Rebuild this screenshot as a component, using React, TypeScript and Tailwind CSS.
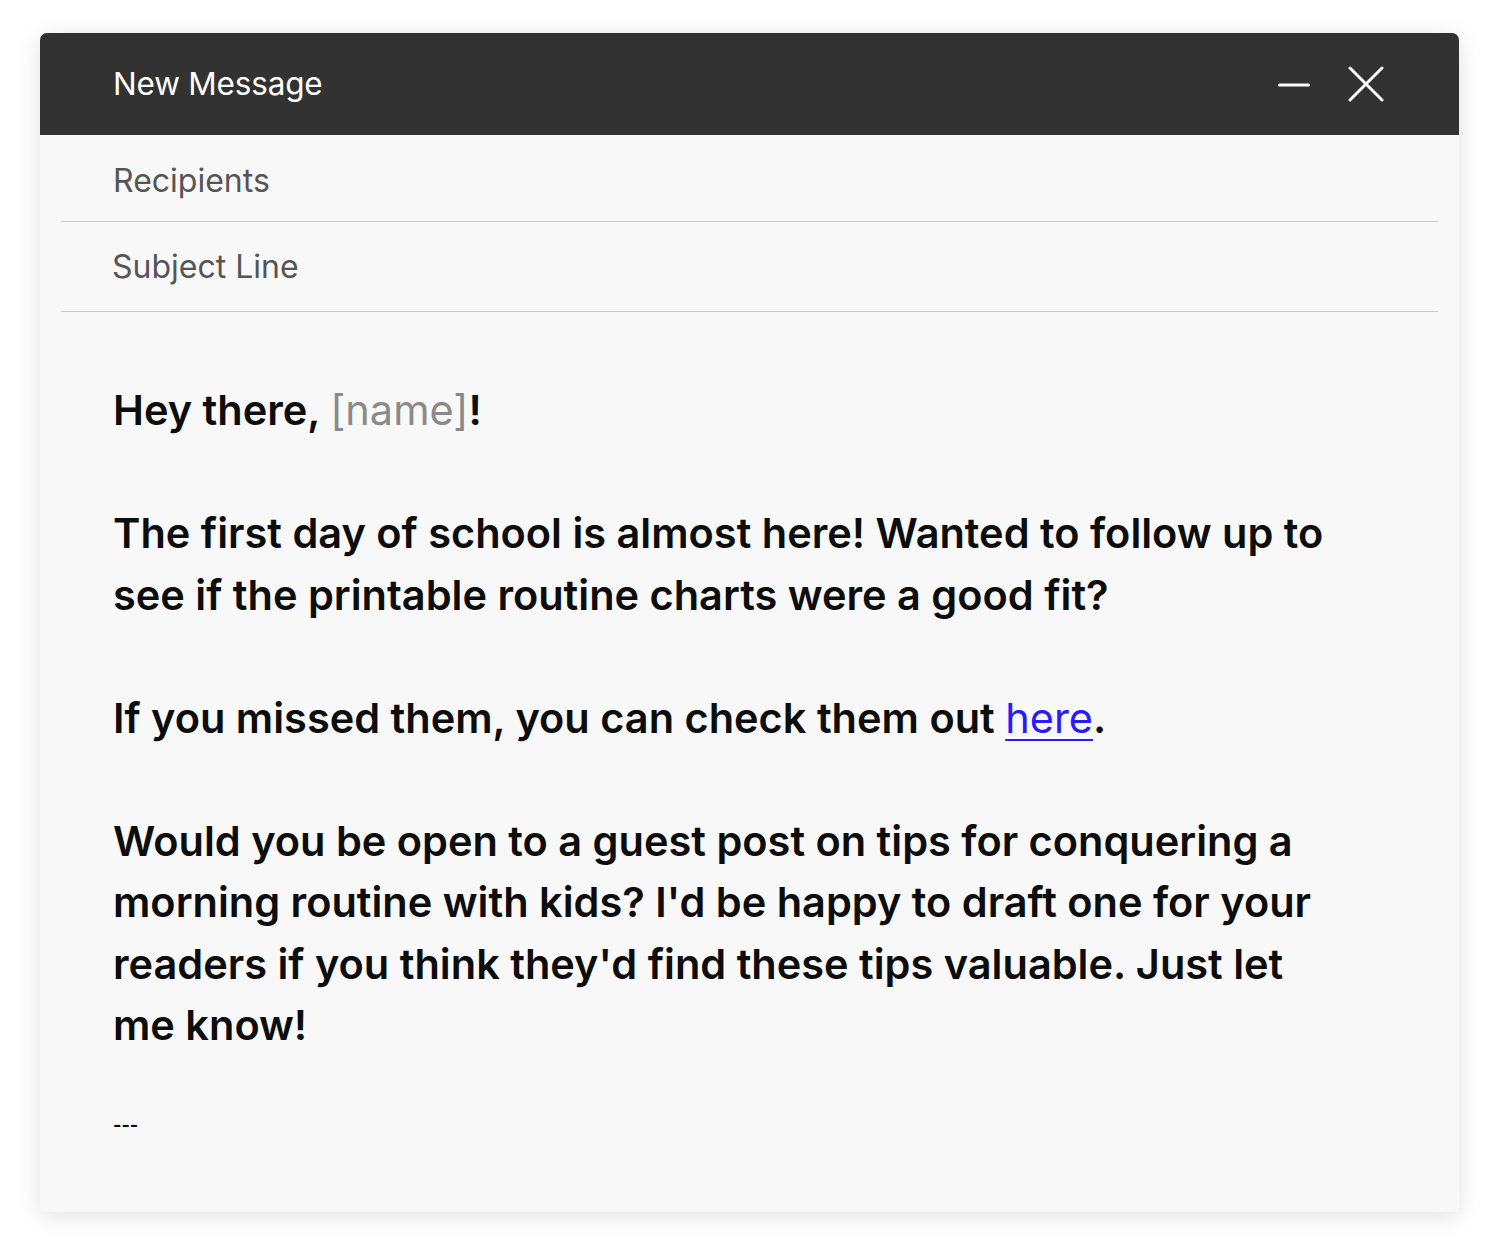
const body = "font-['Inter',sans-serif]";

export default function App() {
  return (
    <div className="min-h-screen bg-white pt-[33px] pl-[40px]">
      <div className="w-[1419px] h-[1179px] bg-[#f8f8f8] rounded-t-[7px] shadow-[0_4px_24px_rgba(0,0,0,0.12)] flex flex-col">
        {/* Header */}
        <div className="h-[102px] bg-[#323232] rounded-t-[7px] flex items-center justify-between pl-[73px] pr-[75px]">
          <span className={`${body} text-white text-[31.5px] font-normal tracking-[-0.2px]`}>New Message</span>
          <div className="flex items-center gap-[38px]">
            <svg width="32" height="6" viewBox="0 0 32 6" className="mt-[2px]">
              <line x1="1.5" y1="3" x2="30.5" y2="3" stroke="white" strokeWidth="3" strokeLinecap="round" />
            </svg>
            <svg width="36" height="36" viewBox="0 0 36 36">
              <line x1="2" y1="2" x2="34" y2="34" stroke="white" strokeWidth="3" strokeLinecap="round" />
              <line x1="34" y1="2" x2="2" y2="34" stroke="white" strokeWidth="3" strokeLinecap="round" />
            </svg>
          </div>
        </div>

        {/* Fields */}
        <div className="px-[21px]">
          <div className="h-[87px] border-b border-[#c9c9c9] flex items-center pl-[52px] pt-[5px]">
            <span className={`${body} text-[32px] text-[#555555]`}>Recipients</span>
          </div>
          <div className="h-[90px] border-b border-[#c9c9c9] flex items-center pl-[51px] pt-[1px]">
            <span className={`${body} text-[32px] text-[#555555]`}>Subject Line</span>
          </div>
        </div>

        {/* Body */}
        <div className={`${body} pl-[73px] pt-[68px] w-[1301px] text-[41.5px] leading-[61.5px] font-semibold text-[#0d0d0d]`}>
          <p>
            Hey there, <span className="font-normal text-[#8a8a8a]">[name]</span>!
          </p>
          <p className="mt-[61.5px]">
            The first day of school is almost here! Wanted to follow up to see if the printable routine charts were a good fit?
          </p>
          <p className="mt-[61.5px]">
            If you missed them, you can check them out{' '}
            <a href="#" className="font-normal text-[#2a1bff] underline underline-offset-[6px] decoration-[2px]">here</a>.
          </p>
          <p className="mt-[61.5px]">
            Would you be open to a guest post on tips for conquering a morning routine with kids? I'd be happy to draft one for your readers if you think they'd find these tips valuable. Just let me know!
          </p>
          <p className="mt-[56px] text-[18px] leading-[24px] font-bold">---</p>
        </div>
      </div>
    </div>
  );
}
